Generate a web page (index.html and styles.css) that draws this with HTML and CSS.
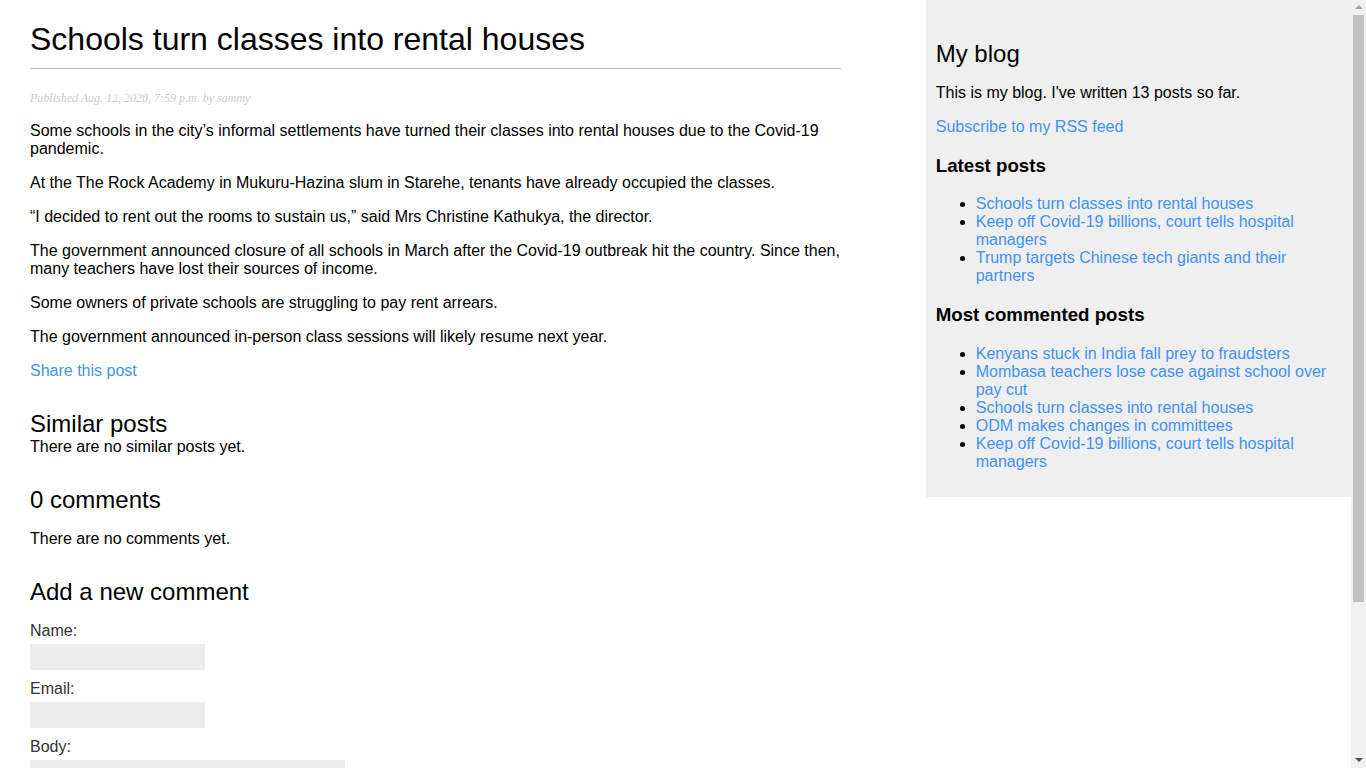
FILE: index.html
```html
<!DOCTYPE html>
<html>
<head>
<meta charset="utf-8">
<title>Schools turn classes into rental houses</title>
<link rel="stylesheet" href="styles.css">
</head>
<body>
<div class="content">
  <h1>Schools turn classes into rental houses</h1>
  <p class="date">Published Aug. 12, 2020, 7:59 p.m. by sammy</p>
  <p>Some schools in the city’s informal settlements have turned their classes into rental houses due to the Covid-19 pandemic.</p>
  <p>At the The Rock Academy in Mukuru-Hazina slum in Starehe, tenants have already occupied the classes.</p>
  <p>“I decided to rent out the rooms to sustain us,” said Mrs Christine Kathukya, the director.</p>
  <p>The government announced closure of all schools in March after the Covid-19 outbreak hit the country. Since then, many teachers have lost their sources of income.</p>
  <p>Some owners of private schools are struggling to pay rent arrears.</p>
  <p>The government announced in-person class sessions will likely resume next year.</p>
  <p><a href="#">Share this post</a></p>
  <h2>Similar posts</h2>
  There are no similar posts yet.
  <h2>0 comments</h2>
  <p>There are no comments yet.</p>
  <h2>Add a new comment</h2>
  <form class="comment-form">
    <p class="field"><label for="id_name">Name:</label><input type="text" id="id_name"></p>
    <p class="field"><label for="id_email">Email:</label><input type="email" id="id_email"></p>
    <p class="field"><label for="id_body">Body:</label><textarea id="id_body" cols="40" rows="10"></textarea></p>
    <p class="field"><input type="submit" class="submit" value="Add comment"></p>
  </form>
</div>
<div class="sidebar">
  <h2>My blog</h2>
  <p>This is my blog. I've written 13 posts so far.</p>
  <p><a href="#">Subscribe to my RSS feed</a></p>
  <h3>Latest posts</h3>
  <ul>
    <li><a href="#">Schools turn classes into rental houses</a></li>
    <li><a href="#">Keep off Covid-19 billions, court tells hospital managers</a></li>
    <li><a href="#">Trump targets Chinese tech giants and their partners</a></li>
  </ul>
  <h3>Most commented posts</h3>
  <ul>
    <li><a href="#">Kenyans stuck in India fall prey to fraudsters</a></li>
    <li><a href="#">Mombasa teachers lose case against school over pay cut</a></li>
    <li><a href="#">Schools turn classes into rental houses</a></li>
    <li><a href="#">ODM makes changes in committees</a></li>
    <li><a href="#">Keep off Covid-19 billions, court tells hospital managers</a></li>
  </ul>
</div>
<div class="scrollbar" aria-hidden="true">
  <span class="arrow arrow-up"></span>
  <span class="thumb"></span>
  <span class="arrow arrow-down"></span>
</div>
</body>
</html>
```

FILE: styles.css
```css
body {
  margin: 0;
  padding: 0 15px 0 0;
  font-family: "Liberation Sans", Arial, sans-serif;
  font-size: 16px;
  display: flex;
  justify-content: space-between;
  align-items: flex-start;
}

a {
  color: #4192f5;
  text-decoration: none;
}

h1 {
  font-weight: normal;
  font-size: 32px;
  border-bottom: 1px solid #bbb;
  padding: 0 0 10px 0;
  margin: 0.67em 0;
}

h2 {
  font-weight: normal;
  font-size: 24px;
  margin: 30px 0 0;
}

.content {
  width: 60%;
  padding: 0 0 0 30px;
}

.sidebar {
  width: 30%;
  padding: 10px;
  background: #efefef;
}

.sidebar ul {
  padding-left: 40px;
}

.date {
  color: #ccc;
  font-family: "Liberation Serif", Georgia, serif;
  font-size: 12px;
  font-style: italic;
}

.comment-form {
  display: flex;
  flex-direction: column;
  padding-top: 16px;
}

.field {
  display: flex;
  flex-direction: column;
  align-items: flex-start;
  margin: 0;
}

label {
  color: #333;
  margin-bottom: 4px;
}

input, textarea {
  margin: 0 0 10px;
  background: #ededed;
  border: 0;
  padding: 6px 10px;
  font-size: 12px;
}

input[type=text], input[type=email] {
  width: 155px;
  font-family: "Liberation Sans", Arial, sans-serif;
}

textarea {
  width: 295px;
  height: 150px;
  font-family: "Liberation Mono", monospace;
}

.submit {
  font-weight: bold;
  background: #4192f5;
  color: #fff;
  padding: 10px 20px;
  font-size: 14px;
  text-transform: uppercase;
}

/* fake browser scrollbar */
.scrollbar {
  position: fixed;
  top: 0;
  right: 0;
  width: 15px;
  height: 100vh;
  background: #f1f1f1;
  display: flex;
  flex-direction: column;
  align-items: center;
}

.arrow {
  width: 0;
  height: 0;
  border-left: 4px solid transparent;
  border-right: 4px solid transparent;
}

.arrow-up {
  border-bottom: 4px solid #a3a3a3;
  margin: 5px 0 6px;
}

.arrow-down {
  border-top: 4px solid #505050;
  margin-top: auto;
  margin-bottom: 6px;
}

.thumb {
  width: 11px;
  height: 587px;
  background: #c1c1c1;
}
```
